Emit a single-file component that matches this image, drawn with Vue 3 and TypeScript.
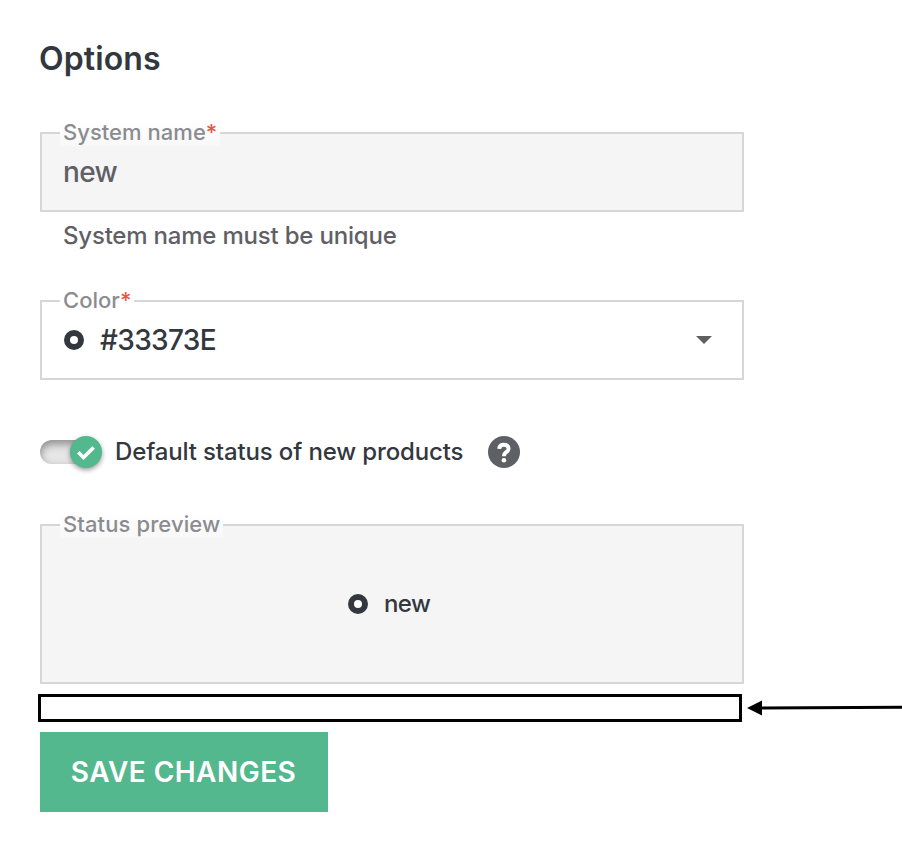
<script setup lang="ts">
import { ref } from 'vue'

const systemName = ref<string>('new')
const color = ref<string>('#33373E')
const isDefault = ref<boolean>(true)
</script>

<template>
  <main class="page">
    <h1 class="title">Options</h1>

    <section class="field field--disabled">
      <span class="field__label">System name<span class="req">*</span></span>
      <span class="field__value">{{ systemName }}</span>
    </section>
    <p class="helper">System name must be unique</p>

    <section class="field field--select">
      <span class="field__label">Color<span class="req">*</span></span>
      <span class="dot"></span>
      <span class="field__value field__value--color">{{ color }}</span>
      <svg class="caret" width="16" height="8" viewBox="0 0 16 8"><path d="M0 0h16L8 8z" fill="#5f6066" /></svg>
    </section>

    <div class="toggle-row">
      <button class="toggle" type="button" role="switch" :aria-checked="isDefault" @click="isDefault = !isDefault">
        <span class="toggle__track"></span>
        <span class="toggle__knob">
          <svg width="32" height="32" viewBox="0 0 32 32"><path d="M7 17.600l2.600-2.600 3.900 3.900 8.800-8.700 2.600 2.600L13.500 24.100z" fill="#fff" /></svg>
        </span>
      </button>
      <span class="toggle-row__text">Default status of new products</span>
      <svg class="help" width="32" height="32" viewBox="0 0 32 32">
        <circle cx="16" cy="16" r="16" fill="#5f6066" />
        <path d="M11.200 12.900C11.400 10.200 13.300 8.800 15.900 8.800c2.800 0 4.700 1.500 4.700 3.700 0 1.800-.9 2.700-2.400 3.700-1.600 1.100-2.200 1.700-2.200 4" fill="none" stroke="#fff" stroke-width="3.900" />
        <circle cx="15.900" cy="24.200" r="2.300" fill="#fff" />
      </svg>
    </div>

    <section class="field field--preview">
      <span class="field__label">Status preview</span>
      <span class="dot"></span>
      <span class="preview__name">{{ systemName }}</span>
    </section>

    <div class="marker">
      <svg class="marker__arrow" width="155" height="20" viewBox="0 0 155 20">
        <path d="M14 11.900L155 11.200" stroke="#000" stroke-width="3" />
        <path d="M0 12L15 4.500v15z" fill="#000" />
      </svg>
    </div>

    <button class="save" type="button">SAVE CHANGES</button>
  </main>
</template>

<style>
body {
  background: #fff;
  overflow: hidden;
}
</style>

<style scoped>
.page {
  box-sizing: border-box;
  width: 902px;
  height: 868px;
  padding: 39px 0 0 40px;
  font-family: Inter, "Liberation Sans", sans-serif;
  font-weight: 500;
  color: #33373e;
}
.title {
  margin: 0 0 53px -1px;
  font-size: 32px;
  line-height: 40px;
  font-weight: 600;
  letter-spacing: 0.1px;
}
.field {
  position: relative;
  box-sizing: border-box;
  display: flex;
  align-items: center;
  width: 704px;
  height: 80px;
  padding: 0 30px 0 21px;
  border: 2px solid #d6d6d6;
}
.field--disabled,
.field--preview {
  background: #f5f5f5;
}
.field__label {
  position: absolute;
  top: -16px;
  left: 18px;
  height: 28px;
  padding: 0 3px;
  font-size: 22px;
  line-height: 28px;
  letter-spacing: 0.03px;
  white-space: nowrap;
  color: #8b8c90;
  background: linear-gradient(#fff, #f8f8f8);
}
.field--select {
  padding-left: 22px;
}
.field--select .field__label {
  background: #fff;
}
.field--preview .field__label {
  letter-spacing: 0.1px;
}
.req {
  color: #eb5543;
}
.field__value {
  font-size: 28px;
  line-height: 36px;
  letter-spacing: -0.65px;
  color: #5f6066;
}
.field__value--color {
  margin-left: 16px;
  color: #33373e;
}
.helper {
  margin: 9px 0 49px 23px;
  font-size: 24px;
  line-height: 30px;
  letter-spacing: -0.2px;
  color: #5f6066;
}
.dot {
  box-sizing: border-box;
  width: 20px;
  height: 20px;
  border: 6px solid #33373e;
  border-radius: 50%;
  background: #fff;
}
.caret {
  margin-left: auto;
}
.toggle-row {
  display: flex;
  align-items: center;
  height: 32px;
  margin: 56px 0;
}
.toggle {
  display: flex;
  align-items: center;
  width: 62px;
  height: 32px;
  padding: 0;
  border: 0;
  background: none;
}
.toggle__track {
  width: 48px;
  height: 24px;
  border-radius: 12px;
  background: #e6e6e6;
  box-shadow: inset 0 4px 8px rgba(0, 0, 0, 0.4);
}
.toggle__knob {
  width: 32px;
  height: 32px;
  margin-left: -18px;
  flex-shrink: 0;
  border-radius: 50%;
  background: #54b88e;
  box-shadow: 0 2px 5px rgba(0, 0, 0, 0.4);
}
.toggle__knob svg {
  display: block;
}
.toggle-row__text {
  width: 373px;
  margin-left: 13px;
  font-size: 24px;
  line-height: 32px;
  letter-spacing: -0.14px;
  white-space: nowrap;
}
.field--preview {
  height: 160px;
  padding: 0 0 0 306px;
}
.preview__name {
  margin-left: 16px;
  font-size: 24px;
  line-height: 32px;
  letter-spacing: -0.6px;
}
.marker {
  position: relative;
  box-sizing: border-box;
  width: 704px;
  height: 28px;
  margin: 10px 0 10px -2px;
  border: 3px solid #000;
}
.marker__arrow {
  position: absolute;
  top: -1px;
  left: 706px;
}
.save {
  display: flex;
  align-items: center;
  justify-content: center;
  width: 288px;
  height: 80px;
  padding: 0 1px 0 0;
  border: 0;
  background: #54b88e;
  color: #fff;
  font-family: inherit;
  font-size: 28px;
  font-weight: 600;
  letter-spacing: 0.47px;
  white-space: nowrap;
}
</style>
